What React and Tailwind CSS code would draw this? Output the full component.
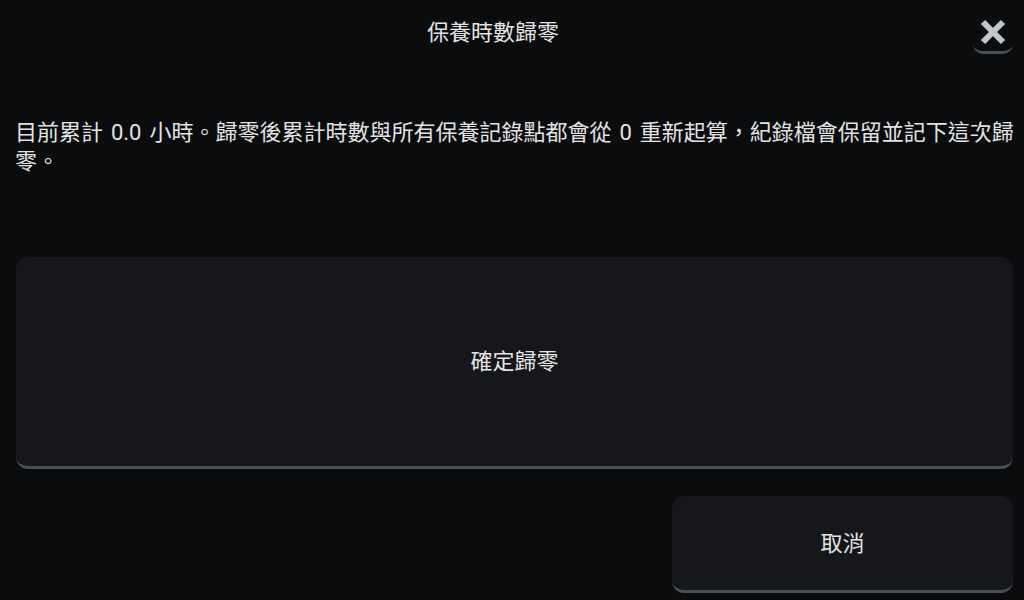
export default function App() {
  const font = { fontFamily: 'Roboto, "Noto Sans CJK TC", sans-serif' };
  return (
    <div lang="zh-TW" className="w-[1024px] h-[600px] overflow-hidden bg-[#0b0c0e] text-[#e2e3e5] pl-4 pr-[11px]" style={font}>
      <div className="h-[66px] flex items-center gap-[3px]">
        <h1 className="flex-1 text-center text-[22px] leading-none">保養時數歸零</h1>
        <button className="mt-[1px] w-[40px] h-[41px] rounded-[10px] border-b-[3px] border-[#4a4e56] bg-[#0b0c0e] flex items-center justify-center">
          <svg width="28" height="26" viewBox="0 0 28 26">
            <path d="M4 3 L24 23 M24 3 L4 23" stroke="#c3c6cc" strokeWidth="6" strokeLinecap="butt" />
          </svg>
        </button>
      </div>
      <p className="-ml-px -mr-[10px] mt-[52px] text-[22px] leading-[29px] [word-spacing:2.5px]">
        目前累計 0.0 小時。歸零後累計時數與所有保養記錄點都會從 0 重新起算，紀錄檔會保留並記下這次歸零。
      </p>
      <button className="mt-[81px] w-full h-[212px] rounded-[12px] bg-[#16171b] border-b-[3px] border-[#4a4e56] text-[22px]">
        確定歸零
      </button>
      <div className="mt-[27px] flex justify-end">
        <button className="w-[341px] h-[97px] rounded-[12px] bg-[#16171b] border-b-[3px] border-[#4a4e56] text-[22px]">
          取消
        </button>
      </div>
    </div>
  );
}
